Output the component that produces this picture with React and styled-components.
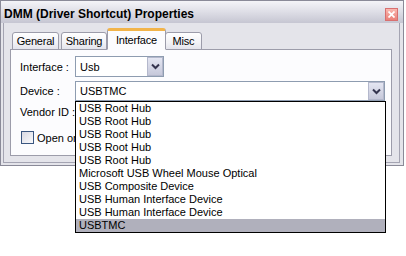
import React from "react";
import styled, { createGlobalStyle } from "styled-components";

const Global = createGlobalStyle`
  html, body { margin: 0; padding: 0; background: #ffffff; }
  body { font-family: "Liberation Sans", Arial, sans-serif; font-size: 11px; color: #000; }
`;

const Page = styled.div`
  position: relative;
  width: 406px;
  height: 256px;
`;

const Window = styled.div`
  width: 404px;
  height: 166px;
  box-sizing: border-box;
  border: 1px solid #8a8a98;
  background: #e4e4ea;
  display: flex;
  flex-direction: column;
`;

const TitleBar = styled.div`
  height: 22px;
  flex: none;
  display: flex;
  align-items: center;
  justify-content: space-between;
  padding: 4px 5px 0 3px;
  box-sizing: border-box;
  background: linear-gradient(#f4f4f8, #e0e0e8 45%, #c6c6d2);
`;

const Title = styled.span`
  font-weight: bold;
  font-size: 12px;
  color: #000;
`;

const CloseBtn = styled.div`
  width: 13px;
  height: 13px;
  box-sizing: border-box;
  border: 1px solid #d87070;
  background: linear-gradient(#fab8b0, #ea8078);
  display: flex;
  align-items: center;
  justify-content: center;
`;

const Body = styled.div`
  flex: 1;
  border: 1px solid #a4a4b2;
  border-top: none;
  margin: 0 3px 2px 2px;
  padding: 5px 6px 6px 6px;
  display: flex;
  flex-direction: column;
`;

const TabStrip = styled.div`
  display: flex;
  align-items: flex-end;
  height: 22px;
  padding-left: 2px;
  position: relative;
  z-index: 2;
  margin-bottom: -1px;
`;

const Tab = styled.div`
  width: ${(p) => p.$w}px;
  height: ${(p) => (p.$active ? "22px" : "18px")};
  box-sizing: border-box;
  margin-right: ${(p) => p.$gap || 0}px;
  margin-left: ${(p) => p.$ml || 0}px;
  border: 1px solid #9c9caa;
  border-bottom: ${(p) => (p.$active ? "1px solid #fcfcfe" : "1px solid #9c9caa")};
  border-top: ${(p) => (p.$active ? "3px solid #f2b44a" : "1px solid #9c9caa")};
  border-radius: 3px 3px 0 0;
  background: ${(p) => (p.$active ? "#fcfcfe" : "linear-gradient(#ffffff, #f2f2f6 60%, #e4e4ec)")};
  display: flex;
  align-items: center;
  justify-content: center;
  font-size: 11px;
  letter-spacing: -0.2px;
  position: relative;
  z-index: ${(p) => (p.$active ? 2 : 1)};
  padding-bottom: ${(p) => (p.$active ? "1px" : "0")};
`;

const Panel = styled.div`
  width: 382px;
  height: 107px;
  box-sizing: border-box;
  border: 1px solid #9c9caa;
  background: #fcfcfe;
  padding: 6px 0 0 9px;
  display: flex;
  flex-direction: column;
`;

const Row = styled.div`
  display: flex;
  align-items: center;
  height: ${(p) => p.$h || 20}px;
  margin-top: ${(p) => p.$mt || 0}px;
`;

const Label = styled.span`
  width: 55px;
  flex: none;
  white-space: nowrap;
  font-size: 11px;
`;

const Combo = styled.div`
  width: ${(p) => p.$w}px;
  height: 100%;
  box-sizing: border-box;
  border: 1px solid #8e9cb0;
  background: #fff;
  display: flex;
  align-items: center;
  justify-content: space-between;
  padding: 0 0 0 4px;
  font-size: 11px;
`;

const DropBtn = styled.div`
  width: 16px;
  height: 100%;
  box-sizing: border-box;
  border: 1px solid #b4b8cc;
  background: linear-gradient(#e4e6f2, #c6c8da);
  display: flex;
  align-items: center;
  justify-content: center;
`;

const CheckRow = styled.div`
  display: flex;
  align-items: center;
  gap: 3px;
  margin-top: 9px;
  padding-left: 1px;
  font-size: 11px;
`;

const Check = styled.div`
  width: 13px;
  height: 13px;
  box-sizing: border-box;
  border: 1px solid #3a5680;
  background: linear-gradient(135deg, #d8d8e2, #fafafc);
`;

const List = styled.div`
  position: absolute;
  left: 75px;
  top: 101px;
  width: 311px;
  box-sizing: border-box;
  border: 1px solid #000;
  background: #fff;
  display: flex;
  flex-direction: column;
  font-size: 11px;
`;

const Item = styled.div`
  height: 13px;
  line-height: 13px;
  padding-left: 3px;
  background: ${(p) => (p.$sel ? "#b0b0bc" : "transparent")};
  white-space: nowrap;
`;

const Chevron = () => (
  <svg width="9" height="7" viewBox="0 0 9 7">
    <path d="M1 1.5 L4.5 5 L8 1.5" fill="none" stroke="#34344e" strokeWidth="2" />
  </svg>
);

const items = [
  "USB Root Hub",
  "USB Root Hub",
  "USB Root Hub",
  "USB Root Hub",
  "USB Root Hub",
  "Microsoft USB Wheel Mouse Optical",
  "USB Composite Device",
  "USB Human Interface Device",
  "USB Human Interface Device",
  "USBTMC",
];

export default function App() {
  return (
    <Page>
      <Global />
      <Window>
        <TitleBar>
          <Title>DMM (Driver Shortcut) Properties</Title>
          <CloseBtn>
            <svg width="7" height="7" viewBox="0 0 7 7">
              <path d="M0.5 0.5 L6.5 6.5 M6.5 0.5 L0.5 6.5" stroke="#fff" strokeWidth="1.7" />
            </svg>
          </CloseBtn>
        </TitleBar>
        <Body>
          <TabStrip>
            <Tab $w={47} $gap={2}>General</Tab>
            <Tab $w={46}>Sharing</Tab>
            <Tab $w={59} $active>Interface</Tab>
            <Tab $w={37} $ml={-1}>Misc</Tab>
          </TabStrip>
          <Panel>
            <Row $h={21}>
              <Label>Interface :</Label>
              <Combo $w={89}>
                Usb
                <DropBtn><Chevron /></DropBtn>
              </Combo>
            </Row>
            <Row $h={20} $mt={4}>
              <Label>Device :</Label>
              <Combo $w={310}>
                USBTMC
                <DropBtn><Chevron /></DropBtn>
              </Combo>
            </Row>
            <Row $h={20} $mt={1}>
              <Label>Vendor ID :</Label>
            </Row>
            <CheckRow>
              <Check />
              Open or
            </CheckRow>
          </Panel>
        </Body>
      </Window>
      <List>
        {items.map((t, i) => (
          <Item key={i} $sel={i === items.length - 1}>{t}</Item>
        ))}
      </List>
    </Page>
  );
}
